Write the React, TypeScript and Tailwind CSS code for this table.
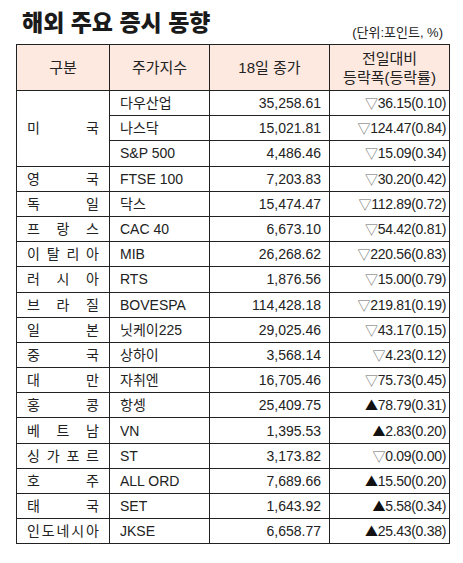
import React from "react";

type Row = { country: string; index: string; close: string; change: string };

const rows: Row[] = [
  { country: "미국", index: "다우산업", close: "35,258.61", change: "▽36.15(0.10)" },
  { country: "", index: "나스닥", close: "15,021.81", change: "▽124.47(0.84)" },
  { country: "", index: "S&P 500", close: "4,486.46", change: "▽15.09(0.34)" },
  { country: "영국", index: "FTSE 100", close: "7,203.83", change: "▽30.20(0.42)" },
  { country: "독일", index: "닥스", close: "15,474.47", change: "▽112.89(0.72)" },
  { country: "프랑스", index: "CAC 40", close: "6,673.10", change: "▽54.42(0.81)" },
  { country: "이탈리아", index: "MIB", close: "26,268.62", change: "▽220.56(0.83)" },
  { country: "러시아", index: "RTS", close: "1,876.56", change: "▽15.00(0.79)" },
  { country: "브라질", index: "BOVESPA", close: "114,428.18", change: "▽219.81(0.19)" },
  { country: "일본", index: "닛케이225", close: "29,025.46", change: "▽43.17(0.15)" },
  { country: "중국", index: "상하이", close: "3,568.14", change: "▽4.23(0.12)" },
  { country: "대만", index: "자취엔", close: "16,705.46", change: "▽75.73(0.45)" },
  { country: "홍콩", index: "항셍", close: "25,409.75", change: "▲78.79(0.31)" },
  { country: "베트남", index: "VN", close: "1,395.53", change: "▲2.83(0.20)" },
  { country: "싱가포르", index: "ST", close: "3,173.82", change: "▽0.09(0.00)" },
  { country: "호주", index: "ALL ORD", close: "7,689.66", change: "▲15.50(0.20)" },
  { country: "태국", index: "SET", close: "1,643.92", change: "▲5.58(0.34)" },
  { country: "인도네시아", index: "JKSE", close: "6,658.77", change: "▲25.43(0.38)" },
];

function Spread({ text }: { text: string }) {
  return (
    <div className="flex justify-between px-[10px]">
      {text.split("").map((c, i) => (
        <span key={i}>{c}</span>
      ))}
    </div>
  );
}

function Change({ value }: { value: string }) {
  const mark = value[0];
  const rest = value.slice(1);
  return (
    <span>
      <span
        className={mark === "▽" ? "text-[#666] text-[13px]" : "text-[#111] text-[13px]"}
        style={{ fontFamily: '"Noto Sans CJK KR", sans-serif' }}
      >
        {mark}
      </span>
      {rest}
    </span>
  );
}

export default function App() {
  const font = { fontFamily: '"Liberation Sans", "Noto Sans CJK KR", sans-serif' };
  return (
    <div className="w-[463px] h-[563px] bg-white text-[#222]" style={font}>
      <div className="w-[433px] ml-[16px]">
        {/* Title */}
        <div className="flex justify-between items-end h-[44px]">
          <h1 className="ml-[6px] mb-[9px] text-[23px] font-black leading-none tracking-[0px] text-[#1a1a1a]">
            해외 주요 증시 동향
          </h1>
          <span className="mr-[6px] mb-[5px] text-[13px] leading-none">(단위:포인트, %)</span>
        </div>

        {/* Table */}
        <table className="w-[433px] table-fixed border-collapse text-[14px] leading-none">
          <colgroup>
            <col className="w-[93px]" />
            <col className="w-[100px]" />
            <col className="w-[120px]" />
            <col className="w-[120px]" />
          </colgroup>
          <thead>
            <tr className="h-[46px] bg-[#fde9df] text-[15px]">
              <th className="border border-[#222] font-normal">구분</th>
              <th className="border border-[#222] font-normal">주가지수</th>
              <th className="border border-[#222] font-normal">18일 종가</th>
              <th className="border border-[#222] font-normal leading-[19px]">
                전일대비
                <br />
                등락폭(등락률)
              </th>
            </tr>
          </thead>
          <tbody>
            {rows.map((r, i) => (
              <tr key={i} className="h-[25.2px]">
                {i === 0 && (
                  <td rowSpan={3} className="border border-[#222]">
                    <Spread text={r.country} />
                  </td>
                )}
                {i > 2 && (
                  <td className="border border-[#222]">
                    <Spread text={r.country} />
                  </td>
                )}
                <td className="border border-[#222] pl-[10px]">{r.index}</td>
                <td className="border border-[#222] pr-[8px] text-right">{r.close}</td>
                <td className="border border-[#222] pr-[3px] text-right tracking-[-0.3px]">
                  <Change value={r.change} />
                </td>
              </tr>
            ))}
          </tbody>
        </table>
      </div>
    </div>
  );
}
